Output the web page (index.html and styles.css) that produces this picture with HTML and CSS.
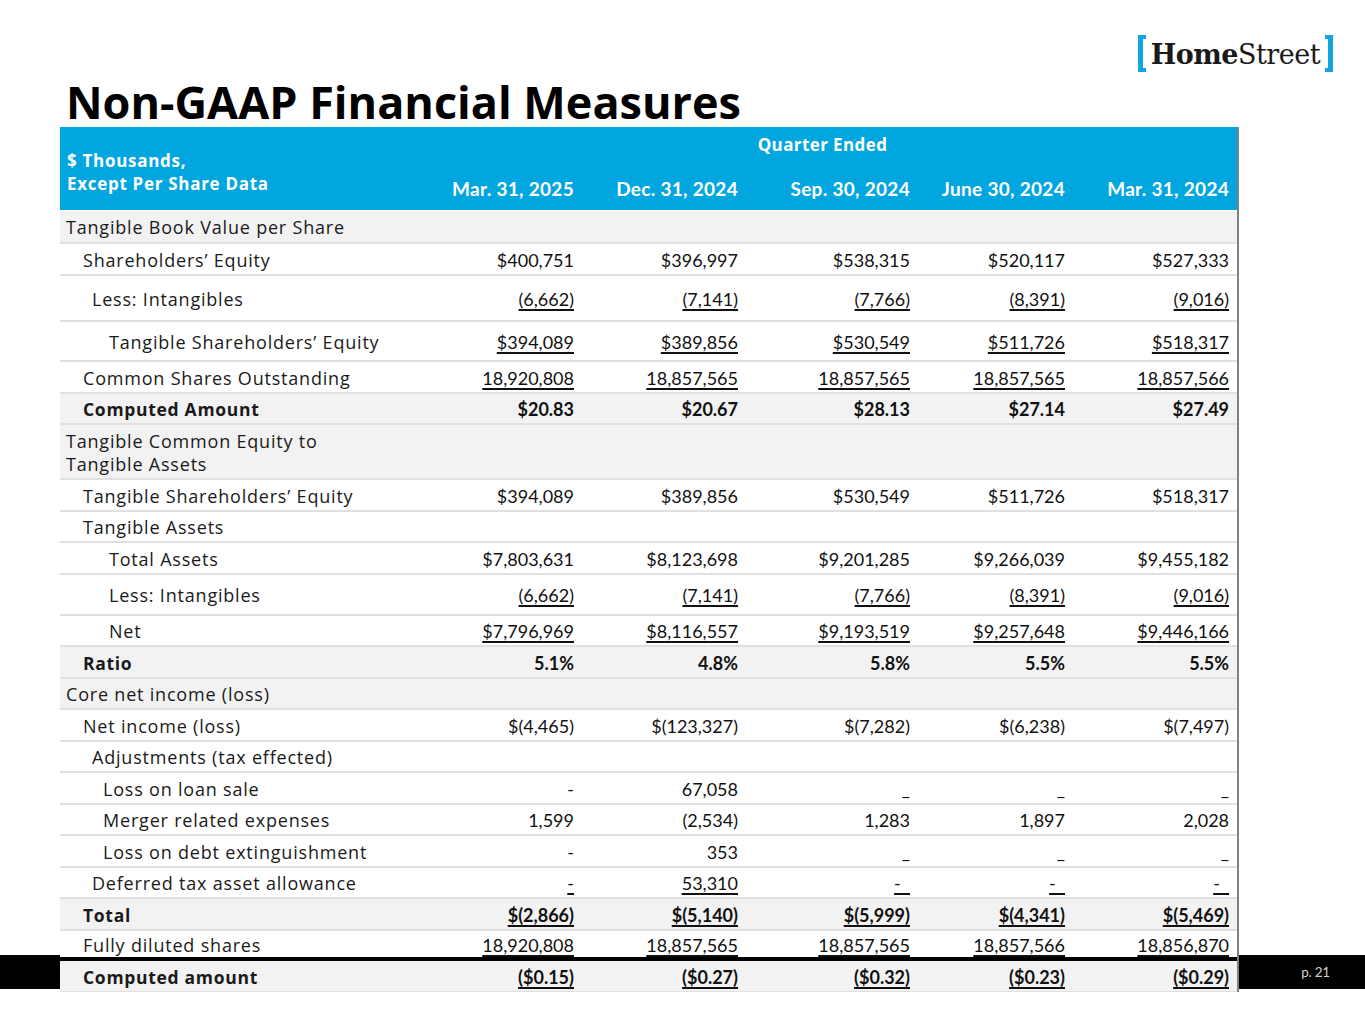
FILE: index.html
```html
<!DOCTYPE html>
<html lang="en">
<head>
<meta charset="utf-8">
<title>Non-GAAP Financial Measures</title>
<link rel="stylesheet" href="styles.css">
</head>
<body>
<div class="slide">
  <header class="top">
    <div class="logo-row">
      <div class="logo">
        <span class="br br-l"></span>
        <span class="logo-text"><b>Home</b>Street</span>
        <span class="br br-r"></span>
      </div>
    </div>
    <h1 class="title">Non-GAAP Financial Measures</h1>
  </header>

  <table class="fin">
    <colgroup>
      <col class="c-label"><col class="c1"><col class="c2"><col class="c3"><col class="c4"><col class="c5">
    </colgroup>
    <thead>
      <tr class="hr1">
        <th class="hlabel" rowspan="2">$ Thousands,<br>Except Per Share Data</th>
        <th class="qe" colspan="5">Quarter Ended</th>
      </tr>
      <tr class="hr2">
        <th>Mar. 31, 2025</th><th>Dec. 31, 2024</th><th>Sep. 30, 2024</th><th>June 30, 2024</th><th>Mar. 31, 2024</th>
      </tr>
    </thead>
    <tbody>
      <tr class="sec"><td class="l0">Tangible Book Value per Share</td><td></td><td></td><td></td><td></td><td></td></tr>
      <tr class="h33"><td class="l1">Shareholders’ Equity</td><td>$400,751</td><td>$396,997</td><td>$538,315</td><td>$520,117</td><td>$527,333</td></tr>
      <tr class="h46"><td class="l15">Less: Intangibles</td><td><u>(6,662)</u></td><td><u>(7,141)</u></td><td><u>(7,766)</u></td><td><u>(8,391)</u></td><td><u>(9,016)</u></td></tr>
      <tr class="h40"><td class="l3">Tangible Shareholders’ Equity</td><td><u>$394,089</u></td><td><u>$389,856</u></td><td><u>$530,549</u></td><td><u>$511,726</u></td><td><u>$518,317</u></td></tr>
      <tr><td class="l1">Common Shares Outstanding</td><td><u>18,920,808</u></td><td><u>18,857,565</u></td><td><u>18,857,565</u></td><td><u>18,857,565</u></td><td><u>18,857,566</u></td></tr>
      <tr class="sec bold"><td class="l1">Computed Amount</td><td>$20.83</td><td>$20.67</td><td>$28.13</td><td>$27.14</td><td>$27.49</td></tr>
      <tr class="sec h55"><td class="l0">Tangible Common Equity to<br>Tangible Assets</td><td></td><td></td><td></td><td></td><td></td></tr>
      <tr><td class="l1">Tangible Shareholders’ Equity</td><td>$394,089</td><td>$389,856</td><td>$530,549</td><td>$511,726</td><td>$518,317</td></tr>
      <tr><td class="l1">Tangible Assets</td><td></td><td></td><td></td><td></td><td></td></tr>
      <tr><td class="l3">Total Assets</td><td>$7,803,631</td><td>$8,123,698</td><td>$9,201,285</td><td>$9,266,039</td><td>$9,455,182</td></tr>
      <tr class="h41"><td class="l3">Less: Intangibles</td><td><u>(6,662)</u></td><td><u>(7,141)</u></td><td><u>(7,766)</u></td><td><u>(8,391)</u></td><td><u>(9,016)</u></td></tr>
      <tr><td class="l3">Net</td><td><u>$7,796,969</u></td><td><u>$8,116,557</u></td><td><u>$9,193,519</u></td><td><u>$9,257,648</u></td><td><u>$9,446,166</u></td></tr>
      <tr class="sec bold"><td class="l1">Ratio</td><td>5.1%</td><td>4.8%</td><td>5.8%</td><td>5.5%</td><td>5.5%</td></tr>
      <tr class="sec"><td class="l0">Core net income (loss)</td><td></td><td></td><td></td><td></td><td></td></tr>
      <tr><td class="l1">Net income (loss)</td><td>$(4,465)</td><td>$(123,327)</td><td>$(7,282)</td><td>$(6,238)</td><td>$(7,497)</td></tr>
      <tr><td class="l15">Adjustments (tax effected)</td><td></td><td></td><td></td><td></td><td></td></tr>
      <tr><td class="l2">Loss on loan sale</td><td>-</td><td>67,058</td><td>_</td><td>_</td><td>_</td></tr>
      <tr><td class="l2">Merger related expenses</td><td>1,599</td><td>(2,534)</td><td>1,283</td><td>1,897</td><td>2,028</td></tr>
      <tr><td class="l2">Loss on debt extinguishment</td><td>-</td><td>353</td><td>_</td><td>_</td><td>_</td></tr>
      <tr><td class="l15">Deferred tax asset allowance</td><td><u>-</u></td><td><u>53,310</u></td><td><u>-&nbsp;&nbsp;</u></td><td><u>-&nbsp;&nbsp;</u></td><td><u>-&nbsp;&nbsp;</u></td></tr>
      <tr class="sec bold"><td class="l1">Total</td><td><u>$(2,866)</u></td><td><u>$(5,140)</u></td><td><u>$(5,999)</u></td><td><u>$(4,341)</u></td><td><u>$(5,469)</u></td></tr>
      <tr class="h26"><td class="l1">Fully diluted shares</td><td><u>18,920,808</u></td><td><u>18,857,565</u></td><td><u>18,857,565</u></td><td><u>18,857,566</u></td><td><u>18,856,870</u></td></tr>
      <tr class="sec bold last"><td class="l1">Computed amount</td><td><u>($0.15)</u></td><td><u>($0.27)</u></td><td><u>($0.32)</u></td><td><u>($0.23)</u></td><td><u>($0.29)</u></td></tr>
    </tbody>
  </table>

  <div class="footer-bar"><span class="pg">p. 21</span></div>
</div>
</body>
</html>
```

FILE: styles.css
```css
* { box-sizing: border-box; }

html, body {
  margin: 0;
  padding: 0;
  background: #ffffff;
}

.slide {
  position: relative;
  width: 1365px;
  height: 1024px;
  overflow: hidden;
  background: #ffffff;
  font-family: "Open Sans", "DejaVu Sans", sans-serif;
  color: #111;
}

/* ---------- header ---------- */
.top {
  display: flex;
  flex-direction: column;
  padding: 0 32px 0 66px;
}

.logo-row {
  display: flex;
  justify-content: flex-end;
  padding-top: 35px;
  height: 76px;
}

.logo {
  display: flex;
  align-items: center;
  gap: 5px;
  height: 37px;
}

.br {
  display: block;
  width: 8px;
  height: 37px;
  border: 4px solid #14a5e0;
  border-left-width: 5px;
}
.br-l { border-right: none; }
.br-r { border-left: none; border-right-width: 5px; }

.logo-text {
  font-family: "DejaVu Serif", "Liberation Serif", serif;
  font-size: 27px;
  line-height: 37px;
  color: #1a1a1a;
  letter-spacing: -0.5px;
  padding-top: 2px;
}
.logo-text b { font-weight: 700; }

.title {
  margin: 0;
  font-family: "Open Sans", "DejaVu Sans", sans-serif;
  font-weight: 700;
  font-size: 45px;
  line-height: 51px;
  color: #000;
  letter-spacing: 0;
}

/* ---------- table ---------- */
.fin {
  position: relative;
  z-index: 1;
  margin-left: 60px;
  width: 1179px;
  table-layout: fixed;
  border-collapse: separate;
  border-spacing: 0;
  border-right: 2px solid #808080;
  background: #ffffff;
}

.c-label { width: 360px; }
.c1 { width: 162px; }
.c2 { width: 164px; }
.c3 { width: 172px; }
.c4 { width: 155px; }
.c5 { width: 164px; }

.fin th {
  background: #02a6df;
  color: #fff;
  font-weight: 700;
  padding: 0 8px;
}

.hr1 th { height: 38px; }
.hr2 th {
  height: 47px;
  text-align: right;
  font-family: "Lato", "Open Sans", sans-serif;
  font-size: 19px;
  letter-spacing: 0.3px;
  padding-top: 1px;
  border-bottom: 2px solid #fff;
}

.hlabel {
  text-align: left;
  font-size: 17px;
  line-height: 23px;
  letter-spacing: 0.7px;
  padding-left: 7px !important;
  padding-top: 6px !important;
  vertical-align: middle;
  border-bottom: 2px solid #fff;
}

.qe {
  text-align: center;
  font-size: 17px;
  letter-spacing: 0.4px;
  padding-top: 0 !important;
  padding-bottom: 3px !important;
  padding-right: 20px !important;
  vertical-align: middle;
}

.fin td {
  height: 31.5px;
  padding: 2px 8px 0 8px;
  border-bottom: 2px solid #e0e0e0;
  vertical-align: middle;
  text-align: right;
  font-family: "Lato", "Open Sans", sans-serif;
  font-size: 18px;
  line-height: 22px;
  color: #111;
  white-space: nowrap;
}

.fin td:first-child {
  text-align: left;
  font-family: "Open Sans", "DejaVu Sans", sans-serif;
  font-size: 18px;
  letter-spacing: 0.8px;
  color: #1a1a1a;
  white-space: normal;
}

.fin td.l0 { padding-left: 6px; line-height: 23px; }
.fin td.l1 { padding-left: 23px; }
.fin td.l15 { padding-left: 32px; }
.fin td.l2 { padding-left: 43px; }
.fin td.l3 { padding-left: 49px; }

.fin tr.sec td { background: #f2f2f2; }
.fin tr.bold td { font-weight: 700; }
.fin tr.bold td:first-child { font-size: 17.5px; letter-spacing: 0.7px; }

.fin tr.h33 td { height: 32.5px; }
.fin tr.h46 td { height: 46px; }
.fin tr.h40 td { height: 40px; }
.fin tr.h41 td { height: 41px; }
.fin tr.h55 td { height: 55px; }
.fin tr.h26 td { height: 26px; border-bottom: none; }

.fin tr.last td {
  height: 35px;
  border-top: 4px solid #000;
  border-bottom: 1px solid #e0e0e0;
}

.fin u {
  text-decoration: underline;
  text-decoration-thickness: 1.5px;
  text-underline-offset: 3px;
}

/* ---------- footer bar (lies behind the last table row) ---------- */
.footer-bar {
  position: absolute;
  left: 0;
  top: 955px;
  width: 1365px;
  height: 34px;
  background: #000;
  z-index: 0;
  display: flex;
  justify-content: flex-end;
  align-items: center;
  padding-right: 35px;
}

.pg {
  font-family: "Lato", "Open Sans", sans-serif;
  font-size: 13.5px;
  letter-spacing: -0.2px;
  color: #d0d0d0;
}
```
